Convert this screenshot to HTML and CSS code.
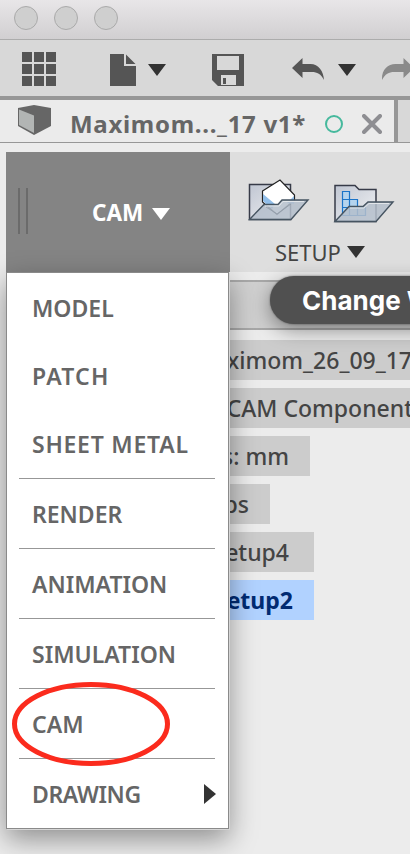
FILE: index.html
```html
<!DOCTYPE html>
<html lang="en">
<head>
<meta charset="utf-8">
<title>CAM</title>
<link rel="stylesheet" href="styles.css">
</head>
<body>
<div class="window">
  <header class="titlebar"><i></i><i></i><i></i></header>
  <div class="toolbar">
    <svg width="410" height="56" viewBox="0 40 410 56">
      <g fill="#555">
        <path d="M22 52h10v10H22zM34 52h10v10H34zM46 52h10v10H46zM22 64h10v10H22zM34 64h10v10H34zM46 64h10v10H46zM22 76h10v10H22zM34 76h10v10H34zM46 76h10v10H46z"/>
        <path d="M110 54h14v12h12v20h-26zM126 54.500V64h9.500z"/>
        <path fill-rule="evenodd" d="M212 54h32v32h-26l-6-6zM217 56v14h22V56zM221 75v10h15V75z"/>
        <path d="M223 78h3v6h-3z"/>
        <path d="M292 68l10.500-10v6h8c8 0 13 7 13.500 16-3-6-7-8-12-8h-9.500v6z"/>
      </g>
      <path fill="#8a8a8a" d="M414 68l-10.500-10v6h-8c-8 0-14 6-13.500 16 3-6 7-8 12-8h9.500v6z"/>
      <path fill="#333" d="M148 64h18l-9 12zM338 64h18l-9 12z"/>
    </svg>
  </div>
  <div class="tabs">
    <div class="tab">
      <svg class="cube" width="34" height="31" viewBox="0 0 34 31">
        <path d="M0 3L16 0l17 3v18L16 30 0 21z" fill="#666"/>
        <path d="M1 4.500l15 6V28L1 20z" fill="#b2b5b4"/>
      </svg>
      <span class="tab-title">Maximom..._17 v1*</span>
      <span class="ring"></span>
      <svg class="close" width="20" height="20" viewBox="0 0 20 20"><path d="M2 2l16 16M18 2L2 18" stroke="#8e8e92" stroke-width="4" stroke-linecap="round"/></svg>
    </div>
  </div>
  <div class="ribbon">
    <div class="workspace">
      <span class="grip"></span>
      <span class="workspace-name">CAM</span>
      <svg width="18" height="12"><path d="M0 0h18L9 12z" fill="#fff"/></svg>
    </div>
    <div class="group">
      <div class="group-icons">
        <svg width="62" height="46" viewBox="248 174 62 46">
          <defs><linearGradient id="fold" x1="0" y1="0" x2="1" y2="1"><stop offset="0" stop-color="#c0c6d2"/><stop offset="1" stop-color="#f1f2f4"/></linearGradient></defs>
          <path d="M249.500 182.500H290.500v35h-41z" fill="url(#fold)" stroke="#373b48" stroke-width="1.500"/>
          <path d="M262.500 189L280 178l14.500 15v5L277 212.500 262.500 200z" fill="#fff" stroke="#222" stroke-width="1.200"/>
          <path d="M263 192l12 10-3 5-9-8zM294 194l-7 7 7 1z" fill="#91bee9"/>
          <path d="M249.500 217.500l14.500-15h14l4-4.500h26l-17 19.500z" fill="#b4becb" fill-opacity=".85" stroke="#465461" stroke-width="1.400"/>
          <path d="M265 204h14l4-4.500h21" fill="none" stroke="#e2e6ea"/>
          <path d="M266 205l11 7 14-10" fill="none" stroke="#8e9aa8" stroke-opacity=".7"/>
        </svg>
        <svg width="62" height="42" viewBox="333 182 62 42">
          <path d="M335 185.500h20l4 4h17v32h-41z" fill="url(#fold)" stroke="#373b48" stroke-width="1.500"/>
          <path d="M342.500 191.500h7v8h8v8h8v8h-23zM342.500 199.500h7v16M342.500 207.500h15v8" fill="#b5d4ee" stroke="#1b74c8" stroke-width="1.200"/>
          <path d="M335 221.500l14-15h14l5-4.500h25l-17 19.500z" fill="#b4becb" fill-opacity=".85" stroke="#465461" stroke-width="1.400"/>
          <path d="M350 208h14l5-4.500h20" fill="none" stroke="#e2e6ea"/>
        </svg>
      </div>
      <div class="group-label"><span>SETUP</span><svg width="18" height="12"><path d="M0 0h18L9 12z" fill="#333"/></svg></div>
    </div>
  </div>
  <main class="browser">
    <div class="browser-bar"></div>
    <div class="row r1"><span>Maximom_26_09_17</span></div>
    <div class="row r2"><span>CAM Component</span></div>
    <div class="row r3"><span>Units: mm</span></div>
    <div class="row r4"><span>Setups</span></div>
    <div class="row r5"><span>Setup4</span></div>
    <div class="row r6"><span>Setup2</span></div>
  </main>
  <div class="tooltip">Change Workspace</div>
  <nav class="menu">
    <div class="item"><span>MODEL</span></div>
    <div class="item"><span class="wider">PATCH</span></div>
    <div class="item"><span class="wide">SHEET METAL</span></div>
    <hr>
    <div class="item"><span>RENDER</span></div>
    <hr>
    <div class="item"><span>ANIMATION</span></div>
    <hr>
    <div class="item"><span>SIMULATION</span></div>
    <hr>
    <div class="item"><span>CAM</span></div>
    <hr>
    <div class="item"><span class="tight">DRAWING</span><svg width="12" height="20"><path d="M0 0l12 10L0 20z" fill="#333"/></svg></div>
  </nav>
  <svg class="mark" width="158" height="84"><ellipse cx="79" cy="42" rx="76.500" ry="39.500" fill="none" stroke="#fb2b1d" stroke-width="5"/></svg>
</div>
</body>
</html>
```
FILE: styles.css
```css
* { box-sizing: border-box; }
body { margin: 0; font-family: "Noto Sans", "Open Sans", sans-serif; }
svg { display: block; flex: none; }
.window { position: relative; width: 410px; height: 854px; overflow: hidden; background: #ececec; white-space: nowrap; }
.titlebar { height: 40px; padding: 6px 14px; display: flex; gap: 16px; background: linear-gradient(#e8e6e8, #d1cfd1); border-bottom: 1px solid #acacac; }
.titlebar i { width: 24px; height: 24px; border: 1px solid #aaa; border-radius: 50%; background: #cfcfcf; }
.toolbar { height: 60px; background: #d8d8d8; border-bottom: 4px solid #979797; }
.tabs { height: 43px; background: #d8d8d8; border-bottom: 1px solid #979797; }
.tab { width: 398px; height: 42px; padding-left: 18px; display: flex; align-items: center; background: #ebebeb; border-right: 4px solid #979797; }
.cube { margin: -2px 18px 0 0; }
.tab-title { width: 236px; margin-top: 5px; font-size: 24px; font-weight: 700; line-height: 34px; letter-spacing: .7px; color: #666; }
.ring { width: 18px; height: 18px; margin: 6px 19px 0 19px; border: 2px solid #46b99d; border-radius: 50%; flex: none; }
.close { margin-top: 6px; }
.ribbon { height: 120px; margin: 9px 0 0 6px; display: flex; background: #dedede; }
.workspace { width: 224px; display: flex; align-items: center; background: #848484; color: #fff; padding-left: 12px; }
.grip { width: 10px; height: 46px; border: solid #6b6b6b; border-width: 0 2px; margin: -2px 64px 0 0; }
.workspace-name { width: 50px; margin-right: 10px; font-size: 22.500px; font-weight: 700; }
.workspace svg { margin-top: 3px; }
.group { padding-top: 22px; }
.group-icons { display: flex; gap: 23px; padding-left: 18px; align-items: flex-end; height: 50px; }
.group-icons svg:first-child { margin-bottom: 2px; }
.group-label { display: flex; align-items: center; gap: 7px; padding-left: 45px; height: 55px; font-size: 22px; color: #444; }
.group-label span { width: 65px; }
.browser { margin-left: 6px; display: flex; flex-direction: column; align-items: flex-start; gap: 8px; padding-top: 8px; }
.browser-bar { width: 100%; height: 50px; background: #d0d0d0; border: solid #a8a8a8; border-width: 2px 0; margin-bottom: 2px; }
.row { height: 40px; padding-bottom: 1px; display: flex; align-items: center; justify-content: flex-end; background: #ccc; font-size: 23px; font-weight: 500; color: #444; }
.r1, .r2 { width: 404px; }
.r1 span { margin-right: -2px; }
.r2 span { margin-right: -3px; }
.r3 { width: 304px; padding-right: 21px; }
.r4 { width: 264px; padding-right: 21px; }
.r5 { width: 308px; padding-right: 25px; }
.r6 { width: 308px; padding-right: 21px; background: #b1d2ff; color: #012b72; font-weight: 700; }
.tooltip { position: absolute; left: 270px; top: 276px; width: 260px; height: 48px; padding-left: 32px; border-radius: 24px; background: #505050; color: #fff; font: 700 26px/49px Inter, sans-serif; box-shadow: 0 6px 20px rgba(0,0,0,.4), 0 0 2px rgba(0,0,0,.5); }
.menu { position: absolute; left: 6px; top: 272px; width: 223px; height: 557px; padding-top: 1px; background: #fff; border: 1px solid #8a8a8a; box-shadow: 1px 1px 0 #d6d6d6, 0 10px 26px rgba(0,0,0,.4); }
.item { height: 68px; padding: 0 12px 0 25px; display: flex; align-items: center; justify-content: space-between; font-size: 23px; font-weight: 650; color: #666; }
.wide { letter-spacing: .75px; }
.wider { letter-spacing: 1.200px; }
.tight { letter-spacing: -.4px; }
.menu hr { height: 1px; margin: 0 13px 1px 12px; border: 0; background: #979797; }
.mark { position: absolute; left: 12px; top: 682px; }
```
